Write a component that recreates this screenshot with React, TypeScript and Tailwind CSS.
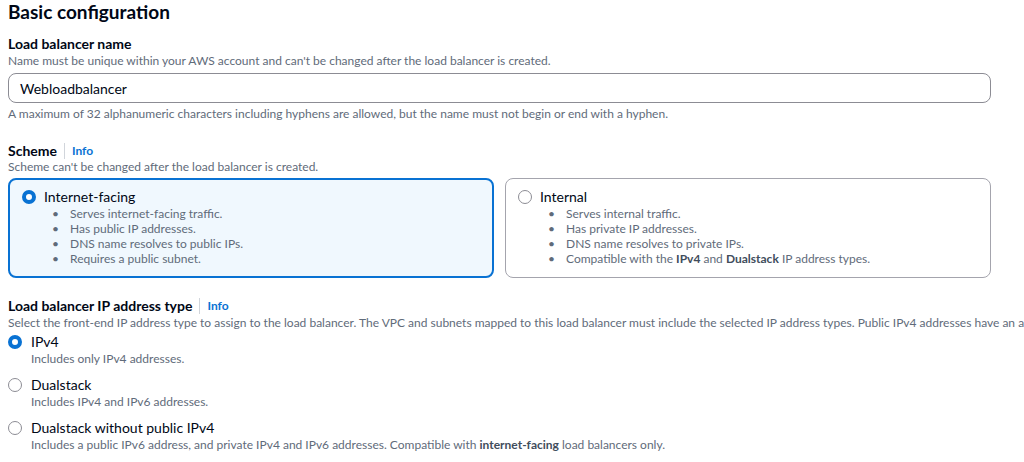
import React from 'react';

const font = { fontFamily: 'Lato, "Open Sans", Arial, sans-serif' };

function Radio({ checked }: { checked: boolean }) {
  return checked ? (
    <span className="inline-block w-[14px] h-[14px] rounded-full border-[4px] border-[#0972d3] bg-white flex-none" />
  ) : (
    <span className="inline-block w-[14px] h-[14px] rounded-full border border-[#8c8c94] bg-white flex-none" />
  );
}

function LabelWithInfo({ label }: { label: string }) {
  return (
    <div className="flex items-center h-[18px] leading-[18px]">
      <span className="text-[14px] font-bold text-[#000716]">{label}</span>
      <span className="mx-[7px] w-px h-[16px] bg-[#d1d5db]" />
      <span className="text-[12px] font-bold text-[#0972d3]">Info</span>
    </div>
  );
}

function SchemeCard({
  title,
  checked,
  items,
}: {
  title: string;
  checked: boolean;
  items: React.ReactNode[];
}) {
  return (
    <div
      className={`rounded-[8px] h-[100px] ${
        checked
          ? 'border-2 border-[#0972d3] bg-[#f0f8fe] pl-[12px] pt-[9px]'
          : 'border border-[#a4a4ad] bg-white pl-[12px] pt-[10px]'
      }`}
    >
      <div className="flex items-center gap-[8px] h-[16px]">
        <Radio checked={checked} />
        <span className="text-[14px] leading-[16px] text-[#000716]">{title}</span>
      </div>
      <ul className="mt-[1px] pl-[30px]">
        {items.map((item, i) => (
          <li key={i} className="flex text-[12px] leading-[15px] text-[#5f6b7a]">
            <span className="w-[18px] flex-none text-[#5f6b7a]">•</span>
            <span>{item}</span>
          </li>
        ))}
      </ul>
    </div>
  );
}

function IpOption({
  title,
  desc,
  checked,
}: {
  title: string;
  desc: React.ReactNode;
  checked: boolean;
}) {
  return (
    <div>
      <div className="flex items-center gap-[9px] h-[18px]">
        <Radio checked={checked} />
        <span className="text-[14px] leading-[18px] text-[#000716]">{title}</span>
      </div>
      <div className="pl-[23px] text-[12px] leading-[16px] text-[#5f6b7a]">{desc}</div>
    </div>
  );
}

export default function App() {
  return (
    <div className="w-[1024px] h-[462px] overflow-hidden bg-white px-2" style={font}>
      <h1 className="text-[19px] leading-[23px] font-bold text-[#000716]">
        Basic configuration
      </h1>

      <div className="mt-[12px] w-[983px]">
        <div className="text-[14px] leading-[18px] font-bold text-[#000716]">Load balancer name</div>
        <div className="text-[12px] leading-[16px] text-[#5f6b7a]">
          Name must be unique within your AWS account and can't be changed after the load balancer is created.
        </div>
        <div className="mt-[4px] h-[30px] rounded-[8px] border border-[#8c8c94] flex items-center px-[11px] text-[14px] text-[#000716]">
          Webloadbalancer
        </div>
        <div className="mt-[3px] text-[12px] leading-[16px] text-[#5f6b7a]">
          A maximum of 32 alphanumeric characters including hyphens are allowed, but the name must not begin or end with a hyphen.
        </div>
      </div>

      <div className="mt-[20px] w-[983px]">
        <LabelWithInfo label="Scheme" />
        <div className="text-[12px] leading-[16px] text-[#5f6b7a] -mt-[1px]">
          Scheme can't be changed after the load balancer is created.
        </div>
        <div className="mt-[3px] grid grid-cols-2 gap-[11px]">
          <SchemeCard
            title="Internet-facing"
            checked
            items={[
              'Serves internet-facing traffic.',
              'Has public IP addresses.',
              'DNS name resolves to public IPs.',
              'Requires a public subnet.',
            ]}
          />
          <SchemeCard
            title="Internal"
            checked={false}
            items={[
              'Serves internal traffic.',
              'Has private IP addresses.',
              'DNS name resolves to private IPs.',
              <>
                Compatible with the <b className="font-bold text-[#414d5c]">IPv4</b> and{' '}
                <b className="font-bold text-[#414d5c]">Dualstack</b> IP address types.
              </>,
            ]}
          />
        </div>
      </div>

      <div className="mt-[19px]">
        <LabelWithInfo label="Load balancer IP address type" />
        <div className="text-[12px] leading-[16px] text-[#5f6b7a] whitespace-nowrap">
          Select the front-end IP address type to assign to the load balancer. The VPC and subnets mapped to this load balancer must include the selected IP address types. Public IPv4 addresses have an additional cost.
        </div>
        <div className="mt-[2px] flex flex-col gap-[9px]">
          <IpOption title="IPv4" desc="Includes only IPv4 addresses." checked />
          <IpOption title="Dualstack" desc="Includes IPv4 and IPv6 addresses." checked={false} />
          <IpOption
            title="Dualstack without public IPv4"
            desc={
              <>
                Includes a public IPv6 address, and private IPv4 and IPv6 addresses. Compatible with{' '}
                <b className="font-bold text-[#414d5c]">internet-facing</b> load balancers only.
              </>
            }
            checked={false}
          />
        </div>
      </div>
    </div>
  );
}
